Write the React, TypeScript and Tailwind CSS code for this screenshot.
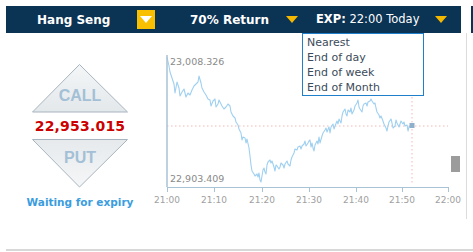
import React from "react";

const pts: [number, number][] = [
  [167,57],[169,66],[170,72],[172,78],[174,84],[175,93],[177,82],[179,88],[180,96],[182,92],[184,89],[186,97],[188,93],[190,95],[192,90],[194,86],[196,84],[198,82],[199,76],[201,83],[202,88],[204,92],[206,95],[208,99],[210,100],[211,106],[213,101],[215,99],[216,107],[218,104],[219,100],[221,104],[222,106],[224,109],[226,107],[228,104],[230,106],[231,112],[233,116],[235,118],[236,122],[238,125],[239,129],[241,133],[242,140],[243,137],[245,138],[246,143],[247,139],[249,148],[250,156],[251,165],[252,171],[254,174],[255,176],[257,174],[258,177],[259,173],[260,180],[261,182],[262,176],[263,170],[264,168],[265,172],[266,174],[267,165],[268,162],[270,160],[271,163],[272,161],[274,167],[275,171],[276,165],[277,166],[279,169],[280,167],[281,163],[283,165],[284,168],[285,164],[287,161],[288,164],[290,166],[291,160],[292,157],[294,153],[295,149],[297,150],[298,147],[300,146],[301,149],[302,146],[304,144],[305,141],[306,146],[308,143],[309,141],[310,140],[311,147],[312,143],[313,148],[314,151],[315,145],[317,141],[318,144],[319,137],[320,143],[322,136],[323,133],[325,130],[326,128],[327,132],[329,127],[330,133],[331,127],[333,124],[334,129],[335,126],[337,121],[338,124],[339,119],[341,123],[342,116],[343,112],[345,109],[346,114],[347,116],[348,110],[350,112],[351,108],[352,114],[354,110],[355,106],[357,103],[358,100],[359,107],[360,109],[362,112],[363,106],[364,104],[366,103],[367,106],[368,102],[370,101],[371,99],[372,101],[374,104],[375,103],[376,108],[377,112],[379,115],[380,118],[381,116],[383,121],[384,124],[386,128],[387,131],[388,126],[389,122],[391,119],[392,123],[393,128],[395,126],[396,120],[397,123],[399,127],[400,124],[401,121],[403,124],[404,122],[405,126],[407,125],[408,131],[409,127],[410,126],[412,126]
];

const ticks = [
  { x: 167, l: "21:00" },
  { x: 214, l: "21:10" },
  { x: 262, l: "21:20" },
  { x: 309, l: "21:30" },
  { x: 356, l: "21:40" },
  { x: 402, l: "21:50" },
  { x: 448, l: "22:00" },
];

function Caret({ className }: { className?: string }) {
  return (
    <svg width="12" height="7" viewBox="0 0 12 7" className={className}>
      <polygon points="0,0 12,0 6,7" fill="currentColor" />
    </svg>
  );
}

function Chart() {
  const d = pts.map((p, i) => `${i ? "L" : "M"}${p[0] - 154},${p[1] - 33}`).join(" ");
  return (
    <svg width="312" height="186" viewBox="0 0 312 186" className="block" style={{ fontFamily: '"DejaVu Sans", Verdana, sans-serif' }}>
      <line x1={13} y1={93} x2={294} y2={93} stroke="#f4b8b8" strokeWidth="1" strokeDasharray="1.5 2.5" />
      <line x1={258} y1={24} x2={258} y2={152} stroke="#f4b8b8" strokeWidth="1" strokeDasharray="1.5 2.5" />
      <path d={d} fill="none" stroke="#9fd0f0" strokeWidth="1.1" strokeLinejoin="round" />
      <rect x={255.5} y={90} width={5} height={5} fill="#8fb0cc" />
      <line x1={13} y1={22} x2={13} y2={154} stroke="#a8c2d6" strokeWidth="1.5" />
      <line x1={13} y1={154.5} x2={294} y2={154.5} stroke="#a8c2d6" strokeWidth="1" />
      {ticks.map((t) => (
        <g key={t.l}>
          <line x1={t.x - 154 + 0.5} y1={154} x2={t.x - 154 + 0.5} y2={159} stroke="#a8c2d6" strokeWidth="1" />
          <text x={t.x - 154} y={170} fontSize="9" fill="#a0a0a0" textAnchor="middle">{t.l}</text>
        </g>
      ))}
      <text x={16} y={32} fontSize="9.5" fill="#8a8a8a">23,008.326</text>
      <text x={16} y={149} fontSize="9.5" fill="#8a8a8a">22,903.409</text>
      <rect x={297} y={123} width={9} height={16} fill="#9c9c9c" />
    </svg>
  );
}

function Tri({ up, label }: { up: boolean; label: string }) {
  const points = up ? "0.5,48 47.5,0.5 95.5,48" : "0.5,0.5 95.5,0.5 47.5,48";
  const gid = up ? "gu" : "gd";
  return (
    <svg width="96" height="49" viewBox="0 0 96 49" className="block">
      <defs>
        <linearGradient id={gid} x1="0" y1="0" x2="0" y2="1">
          <stop offset="0" stopColor={up ? "#f4f6f7" : "#e6eaed"} />
          <stop offset="1" stopColor={up ? "#e3e8eb" : "#f5f6f7"} />
        </linearGradient>
      </defs>
      <polygon points={points} fill={`url(#${gid})`} stroke="#a7b4bf" strokeWidth="1" />
      <text
        x="48"
        y={up ? 37 : 24}
        textAnchor="middle"
        fontSize="16"
        fontWeight="bold"
        fill="#a3c0d6"
        style={{ fontFamily: '"Liberation Sans", Arial, sans-serif' }}
      >
        {label}
      </text>
    </svg>
  );
}

export default function App() {
  return (
    <div className="relative w-[473px] h-[252px] bg-white overflow-hidden" style={{ fontFamily: '"DejaVu Sans", Verdana, sans-serif' }}>
      <div className="flex">
        <div className="mt-[6px] ml-[6px] w-[455px] h-[27px] bg-[#0b3354] flex items-center text-white">
          <span className="w-[131px] pl-[31px] text-[12px] font-bold leading-none">Hang Seng</span>
          <span className="w-[18px] h-[19px] bg-[#f8c000] flex items-center justify-center">
            <Caret className="text-white" />
          </span>
          <span className="pl-[35px] w-[131px] text-[12px] font-bold leading-none whitespace-nowrap">70% Return</span>
          <Caret className="text-[#f5b800]" />
          <span className="pl-[18px] w-[137px] text-[11.5px] leading-none whitespace-nowrap">
            <b>EXP:</b> 22:00 Today
          </span>
          <Caret className="text-[#f5b800]" />
        </div>
        <div className="ml-[10px] mt-[6px] w-[2px] h-[27px] bg-[#0b3354]" />
      </div>

      <div className="flex">
        <div className="ml-[6px] w-[148px] flex flex-col items-center pt-[31px]">
          <Tri up label="CALL" />
          <div className="h-[26px] flex items-center text-[14px] font-bold text-[#cc0000] leading-none tracking-[0.2px]">22,953.015</div>
          <Tri up={false} label="PUT" />
          <div className="mt-[9px] text-[10.5px] font-bold text-[#3a9de0] leading-none">Waiting for expiry</div>
        </div>
        <div className="relative">
          <Chart />
        </div>
        <div className="w-[1px] h-[186px] bg-[#dcdcdc]" />
      </div>

      <div className="absolute left-[6px] right-0 top-[249px] h-[2px] bg-[#d8d8d8]" />

      <div className="absolute left-[302px] top-[33px] w-[122px] h-[63px] border border-[#1f7fca] bg-white pl-[4px] pt-[1px] text-[11px] leading-[15px] text-[#3b4b5a]">
        <div>Nearest</div>
        <div>End of day</div>
        <div>End of week</div>
        <div>End of Month</div>
      </div>
    </div>
  );
}
